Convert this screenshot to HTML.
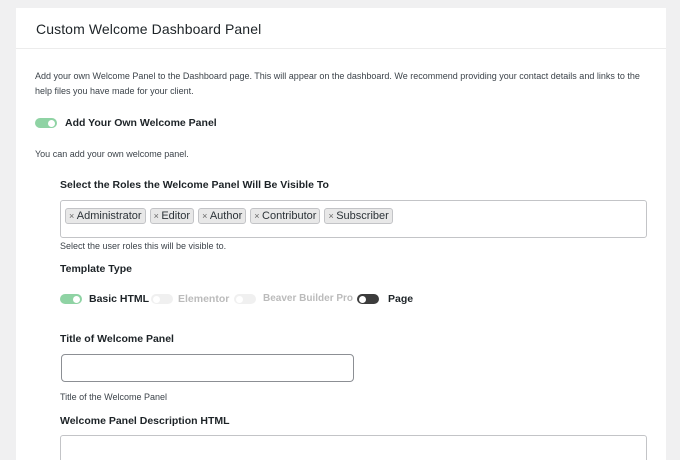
<!DOCTYPE html>
<html><head><meta charset="utf-8"><style>
*{margin:0;padding:0;box-sizing:border-box}
html,body{width:680px;height:460px;overflow:hidden}
body{background:#f0f0f1;font-family:"Liberation Sans",sans-serif;color:#1d2327;position:relative}
.panel{position:absolute;left:16px;top:8px;width:650px;height:460px;background:#fff}
.hd{position:absolute;left:16px;top:8px;width:650px;height:41px;border-bottom:1px solid #ececec}
.a{position:absolute;white-space:nowrap}
.h1{font-size:14px;left:36px;top:21px;color:#1d2327;letter-spacing:0.1px}
.sm{font-size:9px;color:#3c434a}
.b{font-size:10.5px;font-weight:bold;color:#1d2327}
.tg{position:absolute;width:22px;height:10px;border-radius:5px}
.tg i{position:absolute;top:1.5px;width:7px;height:7px;border-radius:50%;background:#fff}
.tag{display:inline-block;border:1px solid #c3c4c7;background:#e8e8e8;border-radius:3px;font-size:11px;padding:1px 3px;margin-right:4px;color:#2c3338;line-height:12px}
.tag span{font-size:9px;color:#666}
</style></head><body>
<div class="panel"></div>
<div class="hd"></div>
<div class="a h1">Custom Welcome Dashboard Panel</div>
<div class="a sm" style="left:35px;top:71px">Add your own Welcome Panel to the Dashboard page. This will appear on the dashboard. We recommend providing your contact details and links to the</div>
<div class="a sm" style="left:35px;top:86px">help files you have made for your client.</div>
<div class="tg" style="left:35px;top:118px;background:#8fd3a4"><i style="left:13px"></i></div>
<div class="a b" style="left:65px;top:117px">Add Your Own Welcome Panel</div>
<div class="a sm" style="left:35px;top:149px">You can add your own welcome panel.</div>
<div class="a b" style="left:60px;top:179px">Select the Roles the Welcome Panel Will Be Visible To</div>
<div class="a" style="left:60px;top:200px;width:587px;height:38px;border:1px solid #c3c4c7;border-radius:3px;padding:5px 4px">
<span class="tag"><span>× </span>Administrator</span><span class="tag"><span>× </span>Editor</span><span class="tag"><span>× </span>Author</span><span class="tag"><span>× </span>Contributor</span><span class="tag"><span>× </span>Subscriber</span></div>
<div class="a sm" style="left:60px;top:241px">Select the user roles this will be visible to.</div>
<div class="a b" style="left:60px;top:263px">Template Type</div>
<div class="tg" style="left:60px;top:294px;background:#8fd3a4"><i style="left:13px"></i></div>
<div class="a b" style="left:89px;top:293px">Basic HTML</div>
<div class="tg" style="left:151px;top:294px;background:#f0f0f0"><i style="left:2px"></i></div>
<div class="a b" style="left:178px;top:293px;color:#bbb">Elementor</div>
<div class="tg" style="left:234px;top:294px;background:#f0f0f0"><i style="left:2px"></i></div>
<div class="a b" style="left:263px;top:293px;color:#bbb;font-size:10px">Beaver Builder Pro</div>
<div class="tg" style="left:357px;top:294px;background:#3c3c3c"><i style="left:2px"></i></div>
<div class="a b" style="left:388px;top:293px">Page</div>
<div class="a b" style="left:60px;top:333px">Title of Welcome Panel</div>
<div class="a" style="left:61px;top:354px;width:293px;height:28px;border:1px solid #8c8f94;border-radius:4px"></div>
<div class="a sm" style="left:60px;top:392px">Title of the Welcome Panel</div>
<div class="a b" style="left:60px;top:415px">Welcome Panel Description HTML</div>
<div class="a" style="left:60px;top:435px;width:587px;height:40px;border:1px solid #c3c4c7;border-radius:3px"></div>
</body></html>
